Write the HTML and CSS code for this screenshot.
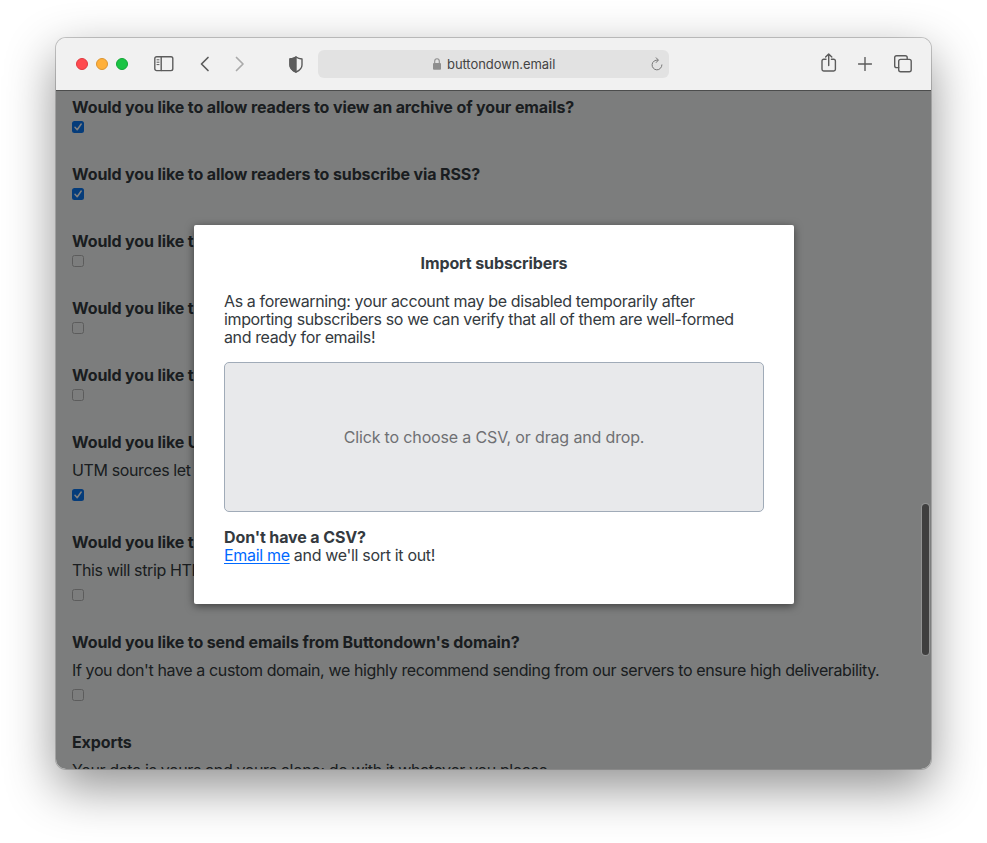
FILE: index.html
```html
<!DOCTYPE html>
<html lang="en">
<head>
<meta charset="utf-8">
<title>buttondown.email</title>
<link rel="stylesheet" href="styles.css">
</head>
<body>
<div class="window">
  <header class="toolbar">
    <div class="lights"><i class="light red"></i><i class="light amber"></i><i class="light green"></i></div>
    <svg class="icon sidebar" width="20" height="16" viewBox="0 0 20 16"><rect x=".8" y=".8" width="18" height="13.8" rx="1.8"/><path d="M7.2 .8v13.8"/><path class="thin" d="M3 3.8h2M3 6.2h2M3 8.6h2"/></svg>
    <svg class="icon back" width="10" height="16" viewBox="0 0 10 16"><path d="M8 1.5 1.5 8 8 14.5"/></svg>
    <svg class="icon forward" width="10" height="16" viewBox="0 0 10 16"><path d="M1.5 1.5 8 8 1.5 14.5"/></svg>
    <svg class="icon shield" width="14" height="17" viewBox="0 0 14 17"><path d="M7 1C5.2 2.2 3 2.8 1 3v6c0 3.300 2.500 5.500 6 7 3.500-1.500 6-3.700 6-7V3C11 2.800 8.800 2.200 7 1z"/><path class="fill" d="M7 1C5.200 2.200 3 2.800 1 3v6c0 3.300 2.500 5.500 6 7z"/></svg>
    <div class="address">
      <svg class="lock" width="8" height="12" viewBox="0 0 8 12"><rect x="0" y="5" width="8" height="6.700" rx="1"/><path d="M1.700 5.500V3.200a2.300 2.500 0 0 1 4.600 0v2.300"/></svg>
      <span>buttondown.email</span>
      <svg class="reload" width="12" height="14" viewBox="0 0 12 14"><path d="M6.800 3.100A4.900 4.900 0 1 0 10.900 7.900M5.200.8 7.400 3.100 5.200 5.500"/></svg>
    </div>
    <svg class="icon share" width="16" height="20" viewBox="0 0 16 20"><path d="M5 6.300H2.700A1.700 1.700 0 0 0 1 8v8.300A1.700 1.700 0 0 0 2.700 18h10a1.700 1.700 0 0 0 1.700-1.700V8a1.700 1.700 0 0 0-1.700-1.700h-2.300M7.700 12.500V1.200M4.600 4.100 7.700 1l3.100 3.100"/></svg>
    <svg class="icon plus" width="14" height="14" viewBox="0 0 14 14"><path d="M7 .5v13M.5 7h13"/></svg>
    <svg class="icon tabs" width="18" height="18" viewBox="0 0 18 18"><path d="M4.700 12.600H2.600A1.900 1.900 0 0 1 .700 10.700V2.600A1.900 1.900 0 0 1 2.600.700h8.700a1.900 1.900 0 0 1 1.900 1.900v1.800"/><rect x="4.700" y="4.400" width="12.500" height="12.300" rx="1.900"/></svg>
  </header>
  <main class="page">
    <section class="setting"><h2>Would you like to allow readers to view an archive of your emails?</h2><span class="check on"><svg viewBox="0 0 12 12"><path d="M3 6.300 5.200 8.800 9.200 3"/></svg></span></section>
    <section class="setting"><h2>Would you like to allow readers to subscribe via RSS?</h2><span class="check on"><svg viewBox="0 0 12 12"><path d="M3 6.300 5.200 8.800 9.200 3"/></svg></span></section>
    <section class="setting"><h2>Would you like t</h2><span class="check"></span></section>
    <section class="setting"><h2>Would you like t</h2><span class="check"></span></section>
    <section class="setting"><h2>Would you like t</h2><span class="check"></span></section>
    <section class="setting"><h2>Would you like U</h2><p>UTM sources let</p><span class="check on"><svg viewBox="0 0 12 12"><path d="M3 6.300 5.200 8.800 9.200 3"/></svg></span></section>
    <section class="setting"><h2>Would you like t</h2><p>This will strip HTM</p><span class="check"></span></section>
    <section class="setting"><h2>Would you like to send emails from Buttondown's domain?</h2><p>If you don't have a custom domain, we highly recommend sending from our servers to ensure high deliverability.</p><span class="check"></span></section>
    <section class="setting"><h2>Exports</h2><p>Your data is yours and yours alone; do with it whatever you please.</p></section>
    <div class="overlay">
      <div class="modal">
        <h1>Import subscribers</h1>
        <p class="warning">As a forewarning: your account may be disabled temporarily after<br>importing subscribers so we can verify that all of them are well-formed<br>and ready for emails!</p>
        <div class="dropzone"><span>Click to choose a CSV, or drag and drop.</span></div>
        <h3>Don't have a CSV?</h3>
        <p class="help"><a href="#">Email me</a> and we'll sort it out!</p>
      </div>
    </div>
    <div class="scrollbar"></div>
  </main>
</div>
</body>
</html>
```
FILE: styles.css
```css
* { box-sizing: border-box; }
body {
  margin: 0;
  height: 843px;
  padding: 38px 56px 0;
  overflow: hidden;
  background: #fff;
  font: 16px/18px Inter, "Liberation Sans", sans-serif;
  color: #343a40;
}
h1, h2, h3, p { margin: 0; font-size: 16px; line-height: 18px; white-space: nowrap; }
h1, h2, h3 { font-weight: 700; letter-spacing: -0.12px; }
p { letter-spacing: -0.375px; }

.window {
  width: 875px;
  height: 731px;
  border-radius: 10px;
  overflow: hidden;
  box-shadow: 0 0 0 1px rgba(0,0,0,.2), 0 18px 50px rgba(0,0,0,.44);
}
.toolbar {
  display: flex;
  align-items: center;
  height: 53px;
  padding: 0 19px 0 20px;
  background: #f1f1f1;
  border-bottom: 1px solid #4c4d4d;
}
.lights { display: flex; gap: 8px; }
.light { width: 12px; height: 12px; border-radius: 50%; border: 1px solid; }
.red { background: #ff4a4f; border-color: #e03940; }
.amber { background: #ffb03a; border-color: #dc9430; }
.green { background: #1ac444; border-color: #12a536; }
.icon { flex: none; fill: none; stroke: #5c5c5c; stroke-width: 1.4; stroke-linecap: round; stroke-linejoin: round; }
.icon .thin { stroke-width: 1; }
.icon .fill { fill: #5c5c5c; }
.sidebar { margin-left: 26px; }
.back { margin-left: 26px; stroke-width: 1.7; }
.forward { margin-left: 25px; stroke: #aaa; stroke-width: 1.7; }
.shield { margin-left: 44px; }
.address {
  display: flex;
  align-items: center;
  width: 351px;
  height: 28px;
  margin-left: 15px;
  padding: 0 6px 0 115px;
  border-radius: 6px;
  background: #e2e2e2;
  color: #444;
  font-size: 13px;
}
.address span { margin-left: 6px; letter-spacing: -.07px; }
.lock { fill: #8e8e8e; }
.lock path { fill: none; stroke: #8e8e8e; stroke-width: 1.1; }
.reload { margin-left: auto; fill: none; stroke: #777; stroke-width: 1; stroke-linecap: round; }
.share { margin-left: 151.5px; margin-top: -2px; }
.plus { margin-left: 21.5px; margin-top: -1px; }
.tabs { margin-left: auto; margin-top: -1px; }

.page { position: relative; height: 678px; padding: 7px 16px 0; overflow: hidden; background: #f8fbfa; }
.setting { margin-bottom: 32px; }
.setting p { margin-top: 10px; }
.check { display: block; width: 12px; height: 12px; margin-top: 5px; border: 1px solid #b9b9b9; border-radius: 2.5px; }
.setting p + .check { margin-top: 10px; }
.check.on { border: 0; background: #0a78f5; }
.check svg { display: block; fill: none; stroke: #fff; stroke-width: 1.5; stroke-linecap: round; stroke-linejoin: round; }

.overlay { position: absolute; inset: 0; padding: 134px 137px 0 138px; background: rgba(0,0,0,.5); }
.modal { width: 600px; height: 379px; padding: 29px 30px 30px; border-radius: 2px; background: #fff; box-shadow: 0 2px 8px rgba(0,0,0,.5); }
.modal h1 { text-align: center; }
.warning { margin-top: 20px; }
.dropzone {
  display: flex;
  align-items: center;
  justify-content: center;
  height: 150px;
  margin-top: 16px;
  border: 1px solid #a0abb8;
  border-radius: 5px;
  background: #e8e9eb;
  color: #6f7073;
  letter-spacing: -.15px;
}
.modal h3 { margin-top: 16px; }
.help { letter-spacing: -.32px; }
.modal a { color: #0069ff; text-decoration: underline; text-underline-offset: 2px; }
.scrollbar { position: absolute; right: 2px; top: 413px; width: 7px; height: 151px; border-radius: 4px; background: #3f3f3f; box-shadow: 0 0 0 1px #929393; }
```
